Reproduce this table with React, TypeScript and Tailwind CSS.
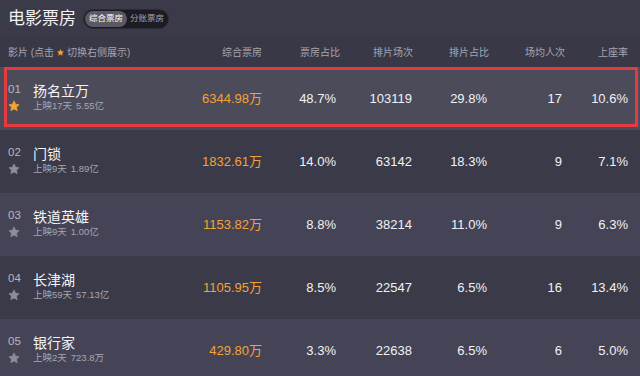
import React from "react";

const FONT = { fontFamily: '"Liberation Sans", "Noto Sans CJK SC", Arial, sans-serif' };

type Row = {
  rank: string;
  name: string;
  days: string;
  total: string;
  box: string;
  boxRate: string;
  shows: string;
  showRate: string;
  avg: string;
  seat: string;
};

const rows: Row[] = [
  { rank: "01", name: "扬名立万", days: "上映17天", total: "5.55亿", box: "6344.98万", boxRate: "48.7%", shows: "103119", showRate: "29.8%", avg: "17", seat: "10.6%" },
  { rank: "02", name: "门锁", days: "上映9天", total: "1.89亿", box: "1832.61万", boxRate: "14.0%", shows: "63142", showRate: "18.3%", avg: "9", seat: "7.1%" },
  { rank: "03", name: "铁道英雄", days: "上映9天", total: "1.00亿", box: "1153.82万", boxRate: "8.8%", shows: "38214", showRate: "11.0%", avg: "9", seat: "6.3%" },
  { rank: "04", name: "长津湖", days: "上映59天", total: "57.13亿", box: "1105.95万", boxRate: "8.5%", shows: "22547", showRate: "6.5%", avg: "16", seat: "13.4%" },
  { rank: "05", name: "银行家", days: "上映2天", total: "723.8万", box: "429.80万", boxRate: "3.3%", shows: "22638", showRate: "6.5%", avg: "6", seat: "5.0%" },
];

function Star({ size, color }: { size: number; color: string }) {
  return (
    <svg width={size} height={size} viewBox="0 0 24 24" className="block">
      <path
        d="M12 1.8l3.1 6.6 7.1.9-5.2 4.9 1.3 7.1L12 17.8l-6.3 3.5 1.3-7.1L1.8 9.3l7.1-.9z"
        fill={color}
        stroke={color}
        strokeWidth="1.5"
        strokeLinejoin="round"
      />
    </svg>
  );
}

const GRID = "grid grid-cols-[192px_70px_74px_76px_75px_75px_66px] pr-[12px]";

export default function App() {
  return (
    <div className="w-[640px] h-[376px] overflow-hidden bg-[#3b3a49]" style={FONT}>
      {/* Title bar */}
      <div className="h-[37px] flex items-center pl-[8px] gap-[7px] bg-[#3b3a49]">
        <div className="text-[17px] leading-none text-[#f2f2f4] mt-[-1px]">电影票房</div>
        <div className="h-[20px] w-[86px] rounded-full bg-[#1d1c24] border border-[#2c2b35] flex items-center px-[1px]">
          <div className="h-[16px] w-[42px] rounded-full bg-[#5a5964] flex items-center justify-center text-[8.5px] leading-none text-white">
            综合票房
          </div>
          <div className="flex-1 flex items-center justify-center text-[8.5px] leading-none text-[#a3a2ac]">
            分账票房
          </div>
        </div>
      </div>

      {/* Column header */}
      <div className={`${GRID} h-[30px] items-center bg-[#393847] text-[10px] text-[#a6a5af]`}>
        <div className="pl-[8px] flex items-center whitespace-nowrap">
          <span>影片 (点击</span>
          <span className="mx-[3px]"><Star size={7} color="#f5a233" /></span>
          <span>切换右侧展示)</span>
        </div>
        <div className="text-right">综合票房</div>
        <div className="text-right mr-[-4px]">票房占比</div>
        <div className="text-right mr-[-1px]">排片场次</div>
        <div className="text-right mr-[-2px]">排片占比</div>
        <div className="text-right mr-[-3px]">场均人次</div>
        <div className="text-right">上座率</div>
      </div>

      {/* Rows */}
      {rows.map((r, i) => {
        const first = i === 0;
        const bg = first ? "bg-[#4c4b5a]" : i % 2 === 1 ? "bg-[#3b3a48]" : "bg-[#454456]";
        return (
          <div key={r.rank} className={`relative h-[63px] ${bg}`}>
            <div className={`${GRID} h-full items-center text-[13px] text-[#f1f1f3]`}>
              <div className="flex flex-col pl-[8px] mt-[-3px]">
                <div className="flex items-center h-[18px]">
                  <span className="w-[25px] text-[11.5px] leading-none text-[#b7b6bf] mt-[-2px]">{r.rank}</span>
                  <span className="text-[14px] leading-none text-[#f4f4f6]">{r.name}</span>
                </div>
                <div className="flex items-center h-[14px] mt-[-1px]">
                  <span className="w-[25px]">
                    <Star size={12} color={first ? "#f5a233" : "#8e8d99"} />
                  </span>
                  <span className="text-[9.5px] leading-none text-[#a7a6b0] flex gap-[4px]">
                    <span>{r.days}</span>
                    <span>{r.total}</span>
                  </span>
                </div>
              </div>
              <div className="text-right text-[#f4a236]">{r.box}</div>
              <div className="text-right">{r.boxRate}</div>
              <div className="text-right">{r.shows}</div>
              <div className="text-right">{r.showRate}</div>
              <div className="text-right">{r.avg}</div>
              <div className="text-right">{r.seat}</div>
            </div>
            {first && (
              <div className="pointer-events-none absolute left-[4px] right-[2px] top-0 bottom-[3px] border-[3px] border-[#e53a3f]" />
            )}
          </div>
        );
      })}
    </div>
  );
}
